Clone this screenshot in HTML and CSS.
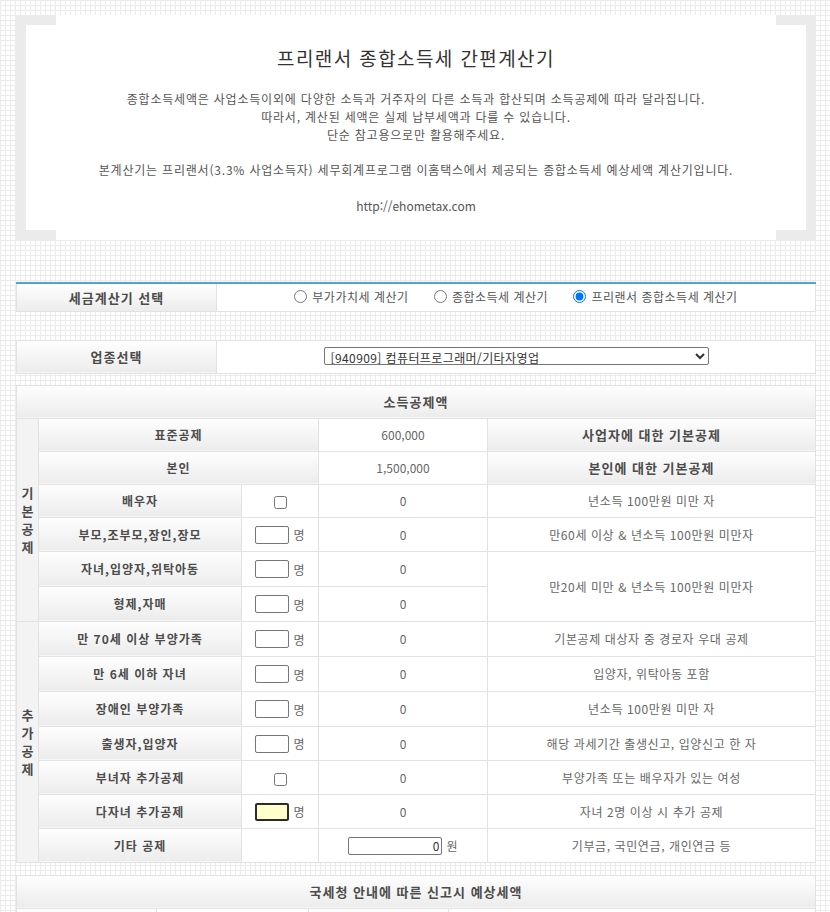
FILE: index.html
```html
<!DOCTYPE html>
<html lang="ko">
<head>
<meta charset="utf-8">
<title>프리랜서 종합소득세 간편계산기</title>
<link rel="stylesheet" href="styles.css">
</head>
<body>
<div class="page">
  <section class="intro">
    <h1>프리랜서 종합소득세 간편계산기</h1>
    <p>종합소득세액은 사업소득이외에 다양한 소득과 거주자의 다른 소득과 합산되며 소득공제에 따라 달라집니다.<br>
    따라서, 계산된 세액은 실제 납부세액과 다를 수 있습니다.<br>
    단순 참고용으로만 활용해주세요.<br>
    <br>
    본계산기는 프리랜서(3.3% 사업소득자) 세무회계프로그램 이홈택스에서 제공되는 종합소득세 예상세액 계산기입니다.<br>
    <br>
    <span class="url">http://ehometax.com</span></p>
  </section>

  <table class="tbl sel-tbl">
    <colgroup><col class="c-head"><col></colgroup>
    <tr>
      <th class="hd big">세금계산기 선택</th>
      <td class="radios">
        <label class="rd"><input type="radio" name="calc">부가가치세 계산기</label>
        <label class="rd"><input type="radio" name="calc">종합소득세 계산기</label>
        <label class="rd"><input type="radio" name="calc" checked>프리랜서 종합소득세 계산기</label>
      </td>
    </tr>
  </table>

  <table class="tbl biz-tbl">
    <colgroup><col class="c-head"><col></colgroup>
    <tr>
      <th class="hd big">업종선택</th>
      <td class="center">
        <select class="biz">
          <option>[940909] 컴퓨터프로그래머/기타자영업</option>
        </select>
      </td>
    </tr>
  </table>

  <table class="tbl main-tbl">
    <colgroup>
      <col class="c0"><col class="c1"><col class="c2"><col class="c3"><col class="c4">
    </colgroup>
    <tr class="r-title"><th class="hd big" colspan="5">소득공제액</th></tr>
    <tr class="h33">
      <th class="grp" rowspan="6">기<br>본<br>공<br>제</th>
      <th class="hd" colspan="2">표준공제</th>
      <td class="val">600,000</td>
      <th class="hd big">사업자에 대한 기본공제</th>
    </tr>
    <tr class="h33">
      <th class="hd" colspan="2">본인</th>
      <td class="val">1,500,000</td>
      <th class="hd big">본인에 대한 기본공제</th>
    </tr>
    <tr class="h33">
      <th class="hd">배우자</th>
      <td class="inp"><input type="checkbox" class="chk"></td>
      <td class="val">0</td>
      <td class="desc">년소득 100만원 미만 자</td>
    </tr>
    <tr class="h34">
      <th class="hd">부모,조부모,장인,장모</th>
      <td class="inp"><input type="text" class="num"><span class="unit">명</span></td>
      <td class="val">0</td>
      <td class="desc">만60세 이상 &amp; 년소득 100만원 미만자</td>
    </tr>
    <tr class="h35">
      <th class="hd">자녀,입양자,위탁아동</th>
      <td class="inp"><input type="text" class="num"><span class="unit">명</span></td>
      <td class="val">0</td>
      <td class="desc" rowspan="2">만20세 미만 &amp; 년소득 100만원 미만자</td>
    </tr>
    <tr class="h35">
      <th class="hd">형제,자매</th>
      <td class="inp"><input type="text" class="num"><span class="unit">명</span></td>
      <td class="val">0</td>
    </tr>
    <tr class="h35">
      <th class="grp" rowspan="7">추<br>가<br>공<br>제</th>
      <th class="hd">만 70세 이상 부양가족</th>
      <td class="inp"><input type="text" class="num"><span class="unit">명</span></td>
      <td class="val">0</td>
      <td class="desc">기본공제 대상자 중 경로자 우대 공제</td>
    </tr>
    <tr class="h35">
      <th class="hd">만 6세 이하 자녀</th>
      <td class="inp"><input type="text" class="num"><span class="unit">명</span></td>
      <td class="val">0</td>
      <td class="desc">입양자, 위탁아동 포함</td>
    </tr>
    <tr class="h35">
      <th class="hd">장애인 부양가족</th>
      <td class="inp"><input type="text" class="num"><span class="unit">명</span></td>
      <td class="val">0</td>
      <td class="desc">년소득 100만원 미만 자</td>
    </tr>
    <tr class="h34">
      <th class="hd">출생자,입양자</th>
      <td class="inp"><input type="text" class="num"><span class="unit">명</span></td>
      <td class="val">0</td>
      <td class="desc">해당 과세기간 출생신고, 입양신고 한 자</td>
    </tr>
    <tr class="h34">
      <th class="hd">부녀자 추가공제</th>
      <td class="inp"><input type="checkbox" class="chk"></td>
      <td class="val">0</td>
      <td class="desc">부양가족 또는 배우자가 있는 여성</td>
    </tr>
    <tr class="h34">
      <th class="hd">다자녀 추가공제</th>
      <td class="inp"><input type="text" class="num active"><span class="unit">명</span></td>
      <td class="val">0</td>
      <td class="desc">자녀 2명 이상 시 추가 공제</td>
    </tr>
    <tr class="h34">
      <th class="hd">기타 공제</th>
      <td class="inp"></td>
      <td class="val"><input type="text" class="won" value="0"><span class="unit">원</span></td>
      <td class="desc">기부금, 국민연금, 개인연금 등</td>
    </tr>
  </table>

  <table class="tbl tax-tbl">
    <colgroup><col class="t0"><col class="t1"><col class="t2"><col></colgroup>
    <tr class="r-title"><th class="hd big" colspan="4">국세청 안내에 따른 신고시 예상세액</th></tr>
    <tr class="h34">
      <th class="hd"></th>
      <td class="val"></td>
      <th class="hd"></th>
      <td class="val"></td>
    </tr>
  </table>
</div>
</body>
</html>
```

FILE: styles.css
```css
* { box-sizing: border-box; }

html, body { margin: 0; padding: 0; }

body {
  background-color: #fff;
  background-image:
    linear-gradient(#ebebeb 1px, transparent 1px),
    linear-gradient(90deg, #ebebeb 1px, transparent 1px);
  background-size: 5px 5px;
  font-family: "Noto Sans CJK KR", "Noto Sans", sans-serif;
  font-size: 12px;
  color: #666;
}

.page {
  width: 800px;
  margin: 15px 0 0 16px;
  padding-bottom: 40px;
}

/* intro box with bracket corners */
.intro {
  position: relative;
  height: 225px;
  padding-top: 33px;
  background: #fff;
  text-align: center;
}
.intro::before,
.intro::after {
  content: "";
  position: absolute;
  top: 0;
  bottom: 0;
  width: 30px;
  border: 10px solid #ebebeb;
}
.intro::before { left: 0; border-right: 0; }
.intro::after { right: 0; border-left: 0; }

.intro h1 {
  margin: 0;
  font-size: 19px;
  line-height: 20px;
  font-weight: normal;
  letter-spacing: 1.4px;
  color: #333;
}
.intro p {
  margin: 22px 0 0;
  font-size: 12px;
  line-height: 17.8px;
  letter-spacing: 0.8px;
  color: #555;
}
.intro .url { letter-spacing: 0; }

/* tables */
.tbl {
  width: 800px;
  border-collapse: collapse;
  table-layout: fixed;
  background: #fff;
}
.tbl th,
.tbl td {
  border: 1px solid #e2e2e2;
  padding: 0;
  text-align: center;
  vertical-align: middle;
}
.c-head { width: 200px; }

.hd {
  background: linear-gradient(#fefefe, #ececec);
  color: #4c4c4c;
  font-size: 12px;
  font-weight: bold;
  letter-spacing: 1px;
}
.hd.big { font-size: 13px; letter-spacing: 1px; }

.sel-tbl { margin-top: 42px; border-top: 2px solid #4fa2da; }
.sel-tbl th, .sel-tbl td { height: 28px; }
.sel-tbl tr:first-child th,
.sel-tbl tr:first-child td { border-top: 2px solid #4fa2da; }

.radios { color: #555; }
.rd {
  display: inline-flex;
  align-items: center;
  margin: 0 11px;
  font-size: 12px;
  letter-spacing: 0.5px;
}
.rd input {
  width: 13px;
  height: 13px;
  margin: 0 5px 0 0;
}

.biz-tbl { margin-top: 28px; }
.biz-tbl th, .biz-tbl td { height: 33px; }
.center { text-align: center; }
.biz {
  width: 385px;
  height: 18px;
  margin: 0;
  padding: 0 2px;
  border: 1px solid #767676;
  border-radius: 2px;
  background: #fff;
  color: #333;
  font-family: "Noto Sans CJK KR", "Noto Sans", sans-serif;
  font-size: 12px;
  letter-spacing: 0.4px;
  line-height: 16px;
}

.main-tbl { margin-top: 11px; }
.c0 { width: 22px; }
.c1 { width: 203px; }
.c2 { width: 77px; }
.c3 { width: 169px; }

.r-title th { height: 33px; }
.h33 > * { height: 33px; }
.h34 > * { height: 34px; }
.h35 > * { height: 35px; }

.grp {
  background: #f3f3f3;
  color: #4c4c4c;
  font-size: 13px;
  font-weight: bold;
  line-height: 18px;
}

.val { color: #666; font-size: 12px; }
.desc { color: #666; font-size: 12px; letter-spacing: 0.6px; }

.inp { color: #666; }
.num {
  width: 34px;
  height: 18px;
  padding: 0 2px;
  border: 1px solid #767676;
  border-radius: 2px;
  background: #fff;
  vertical-align: middle;
  font-size: 12px;
}
.num.active {
  background: #ffffcc;
  border: 2px solid #2b2b2b;
}
.chk {
  width: 13px;
  height: 13px;
  margin: 0;
  vertical-align: middle;
}
.unit {
  display: inline-block;
  margin-left: 4px;
  color: #666;
  font-size: 12px;
  vertical-align: middle;
}
.won {
  width: 94px;
  height: 18px;
  padding: 0 2px;
  border: 1px solid #767676;
  border-radius: 2px;
  text-align: right;
  vertical-align: middle;
  color: #333;
  font-family: "Noto Sans CJK KR", "Noto Sans", sans-serif;
  font-size: 12px;
}

.tax-tbl { margin-top: 12px; }
.t0 { width: 140px; }
.t1 { width: 152px; }
.t2 { width: 140px; }
```
